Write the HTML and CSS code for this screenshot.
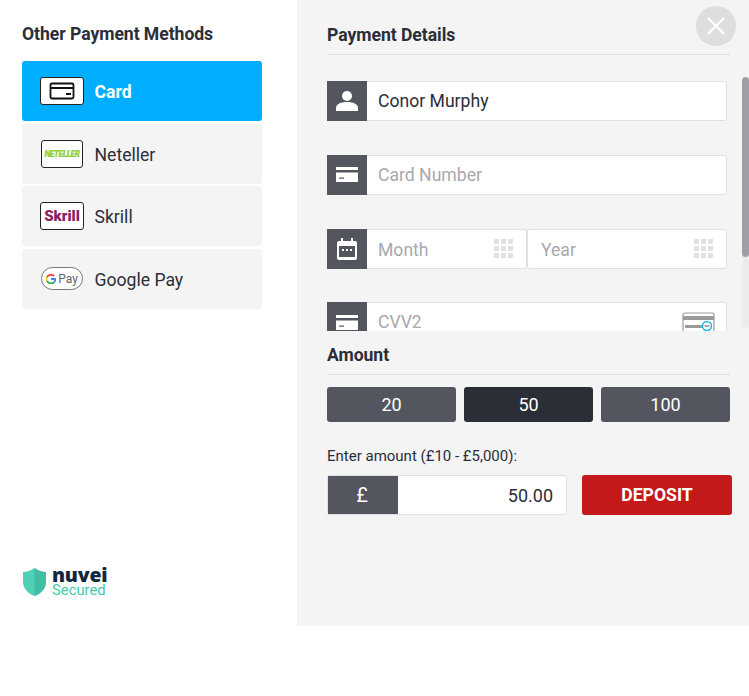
FILE: index.html
```html
<!DOCTYPE html>
<html lang="en">
<head>
  <meta charset="UTF-8">
  <title>Deposit</title>
  <meta name="viewport" content="width=device-width, initial-scale=1.0">
  <link rel="stylesheet" href="styles.css">
</head>
<body>
  <div class="modal">

    <!-- Left column -->
    <div class="methods">
      <h3 class="methods-title">Other Payment Methods</h3>

      <div class="method active">
        <span class="method-logo">
          <svg width="30" height="20" viewBox="0 0 30 20">
            <rect x="1.500" y="1.500" width="23" height="15" rx="1.500" transform="translate(2 1)" fill="none" stroke="#111" stroke-width="1.800"/>
            <rect x="3" y="6" width="24" height="2" fill="#111"/>
            <rect x="19" y="12" width="5" height="2" fill="#111"/>
          </svg>
        </span>
        <span class="method-name">Card</span>
      </div>

      <div class="method">
        <span class="method-logo small"><span class="neteller">NETELLER</span></span>
        <span class="method-name">Neteller</span>
      </div>

      <div class="method">
        <span class="method-logo"><span class="skrill">Skrill</span></span>
        <span class="method-name">Skrill</span>
      </div>

      <div class="method">
        <span class="method-logo pill">
          <svg width="10" height="10" viewBox="0 0 20 20">
            <path d="M10 10h9a9 9 0 0 1-3 6.500" fill="none" stroke="#4285f4" stroke-width="3.600"/>
            <path d="M16 16.500A9 9 0 0 1 2 14" fill="none" stroke="#34a853" stroke-width="3.600"/>
            <path d="M2 14a9 9 0 0 1 0-8" fill="none" stroke="#fbbc05" stroke-width="3.600"/>
            <path d="M2 6a9 9 0 0 1 14-2" fill="none" stroke="#ea4335" stroke-width="3.600"/>
          </svg>
          <span class="gpay">Pay</span>
        </span>
        <span class="method-name">Google Pay</span>
      </div>

      <div class="secured">
        <svg width="25" height="30" viewBox="0 0 25 29" preserveAspectRatio="none">
          <path d="M12.500 1C9 3.500 5 4.600 1 5v9c0 7 5 11.500 11.500 14C19 25.500 24 21 24 14V5c-4-.4-8-1.500-11.500-4z" fill="#4fcfb4"/>
          <path d="M12.500 1c3.500 2.500 7.500 3.600 11.500 4v9c0 7-5 11.500-11.500 14z" fill="#40bda3"/>
        </svg>
        <div class="secured-text">
          <div class="nuvei">nuvei</div>
          <div class="secured-label">Secured</div>
        </div>
      </div>
    </div>

    <!-- Right column -->
    <div class="details">
      <button class="close" aria-label="Close">
        <svg width="20" height="20" viewBox="0 0 20 20">
          <path d="M2 2l16 16M18 2L2 18" stroke="#fff" stroke-width="2.400"/>
        </svg>
      </button>

      <h3 class="section-title">Payment Details</h3>

      <div class="fields">
        <div class="field">
          <span class="field-icon">
            <svg width="22" height="22" viewBox="0 0 22 22">
              <circle cx="11" cy="6" r="5" fill="#fff"/>
              <path d="M0 21v-3c0-4 5-6 11-6s11 2 11 6v3z" fill="#fff"/>
            </svg>
          </span>
          <input class="field-input" type="text" value="Conor Murphy">
        </div>

        <div class="field">
          <span class="field-icon">
            <svg width="22" height="15" viewBox="0 0 22 15">
              <path d="M0 0h22v3H0zM0 5.500h22V15H0z" fill="#fff"/>
              <rect x="3" y="10.500" width="5" height="1.200" fill="#53565e"/>
            </svg>
          </span>
          <input class="field-input" type="text" placeholder="Card Number">
        </div>

        <div class="field">
          <span class="field-icon">
            <svg width="20" height="22" viewBox="0 0 20 22">
              <path d="M4 0h2v3h8V0h2v3h2a2 2 0 0 1 2 2v15a2 2 0 0 1-2 2H2a2 2 0 0 1-2-2V5a2 2 0 0 1 2-2h2z" fill="#fff"/>
              <rect x="2" y="8" width="16" height="11" fill="#53565e"/>
              <path d="M5 11h2v2H5zM9 11h2v2H9zM13 11h2v2h-2z" fill="#fff"/>
            </svg>
          </span>
          <div class="date-box">
            <input class="field-input date" type="text" placeholder="Month">
            <span class="grid-icon"><i></i><i></i><i></i><i></i><i></i><i></i><i></i><i></i><i></i></span>
          </div>
          <div class="date-box year">
            <input class="field-input date" type="text" placeholder="Year">
            <span class="grid-icon"><i></i><i></i><i></i><i></i><i></i><i></i><i></i><i></i><i></i></span>
          </div>
        </div>

        <div class="field">
          <span class="field-icon">
            <svg width="22" height="15" viewBox="0 0 22 15">
              <path d="M0 0h22v3H0zM0 5.500h22V15H0z" fill="#fff"/>
              <rect x="3" y="10.500" width="5" height="1.200" fill="#53565e"/>
            </svg>
          </span>
          <div class="date-box">
            <input class="field-input" type="text" placeholder="CVV2">
            <svg class="cvv-icon" width="34" height="24" viewBox="0 0 34 24">
              <rect x="1" y="1" width="31" height="22" rx="2" fill="#fff" stroke="#9a9a9a" stroke-width="1.200"/>
              <rect x="1" y="4" width="31" height="4" fill="#9a9a9a"/>
              <rect x="3" y="13" width="18" height="3" fill="#9a9a9a"/>
              <circle cx="25" cy="14" r="4.500" fill="#fff" stroke="#1ab4e8" stroke-width="1.500"/>
              <rect x="22.500" y="13" width="5" height="2" fill="#aaa"/>
            </svg>
          </div>
        </div>
      </div>

      <span class="scrollbar"><span class="scrollbar-thumb"></span></span>

      <div class="amount">
        <h3 class="section-title">Amount</h3>

        <div class="quick-amounts">
          <button class="quick">20</button>
          <button class="quick selected">50</button>
          <button class="quick">100</button>
        </div>

        <label class="amount-label">Enter amount (£10 - £5,000):</label>

        <div class="amount-row">
          <div class="amount-box">
            <span class="currency">£</span>
            <input class="amount-input" type="text" value="50.00">
          </div>
          <button class="deposit">DEPOSIT</button>
        </div>
      </div>
    </div>

  </div>
</body>
</html>
```

FILE: styles.css
```css
* {
  box-sizing: border-box;
}

body {
  margin: 0;
  background: #fff;
  font-family: Roboto, 'Liberation Sans', sans-serif;
  color: #2b2e38;
}

.modal {
  display: flex;
  width: 749px;
  height: 626px;
}

/* Left column */
.methods {
  display: flex;
  flex-direction: column;
  width: 297px;
  padding: 23px 35px 28px 22px;
}

.methods-title {
  margin: 0 0 16px;
  font-size: 17.600px;
  line-height: 22px;
  font-weight: 700;
  letter-spacing: -0.05px;
}

.method {
  display: flex;
  align-items: center;
  flex: none;
  height: 60px;
  margin-bottom: 2.670px;
  padding-left: 18px;
  background: #f4f4f4;
  border-radius: 3px;
  font-size: 17.600px;
}

.method.active {
  background: #00aeff;
  color: #fff;
  font-weight: 700;
}

.method-name {
  padding-top: 2px;
  margin-left: -0.5px;
}

.method-logo {
  display: flex;
  align-items: center;
  justify-content: center;
  width: 44px;
  height: 28px;
  margin-right: 11px;
  background: #fff;
  border: 1px solid #222;
  border-radius: 3px;
}

.method-logo.small {
  width: 42px;
  margin-left: 1px;
  margin-right: 12px;
}

.method-logo.pill {
  gap: 2px;
  width: 42px;
  height: 23px;
  margin-left: 1px;
  margin-right: 12px;
  border-color: #777;
  border-radius: 12px;
}

.neteller {
  font-size: 8.500px;
  font-weight: 900;
  font-style: italic;
  letter-spacing: -0.5px;
  color: #94d03a;
  -webkit-text-stroke: 0.2px #94d03a;
}

.skrill {
  font-size: 15px;
  font-weight: 900;
  color: #862165;
}

.gpay {
  font-size: 12px;
  color: #5f6368;
}

.secured {
  display: flex;
  align-items: center;
  gap: 5px;
  margin-top: auto;
  margin-right: -40px;
}

.nuvei {
  font-size: 19.500px;
  line-height: 17px;
  font-weight: 800;
  color: #14263b;
  font-family: 'Open Sans', Roboto, sans-serif;
  letter-spacing: -0.2px;
}

.secured-label {
  font-size: 14.800px;
  line-height: 15px;
  color: #45c9ac;
}

/* Right column */
.details {
  position: relative;
  width: 452px;
  padding: 24px 0 0 30px;
  background: #f4f4f4;
}

.close {
  position: absolute;
  top: 6px;
  right: 13px;
  display: flex;
  align-items: center;
  justify-content: center;
  width: 40px;
  height: 40px;
  padding: 0;
  background: #dedede;
  border: none;
  border-radius: 50%;
}

.section-title {
  width: 403px;
  margin: 0;
  padding-bottom: 8px;
  border-bottom: 1px solid #dcdcdc;
  font-size: 17.600px;
  line-height: 22px;
  font-weight: 700;
  letter-spacing: -0.05px;
}

.fields {
  height: 254px;
  margin-top: 22px;
  padding: 4.330px 22px 0 0;
  overflow: hidden;
}

/* scrollbar of the fields area */
.scrollbar {
  position: absolute;
  top: 77px;
  right: 0;
  width: 7px;
  height: 251px;
  background: #ececec;
  border-radius: 4px;
}

.scrollbar-thumb {
  display: block;
  height: 180px;
  background: #a09fa5;
  border-radius: 4px;
}

.field {
  display: flex;
  height: 40px;
  margin-bottom: 33.670px;
}

.field:last-child {
  margin-bottom: 0;
}

.field-icon {
  display: flex;
  flex: none;
  align-items: center;
  justify-content: center;
  width: 40px;
  height: 40px;
  background: #53565e;
}

.field-input {
  flex: 1;
  width: 100%;
  min-width: 0;
  height: 40px;
  padding: 0 11px;
  background: #fff;
  border: 1px solid #e0e0e0;
  border-left: none;
  border-radius: 0 3px 3px 0;
  font-family: inherit;
  font-size: 17.600px;
  color: #2b2e38;
  outline: none;
}

.field-input.date {
  padding-top: 2px;
}

.field-input::placeholder {
  color: #a8a8ae;
  opacity: 1;
}

.date-box {
  position: relative;
  display: flex;
  flex: 1;
}

.date-box.year {
  flex: none;
  width: 200px;
}

.date-box.year .field-input {
  padding-left: 13px;
  border-left: 1px solid #e0e0e0;
  border-radius: 3px;
}

.grid-icon {
  position: absolute;
  top: 10px;
  right: 14px;
  display: grid;
  grid-template-columns: repeat(3, 5px);
  grid-auto-rows: 5px;
  gap: 2px;
}

.grid-icon i {
  background: #e2e2e2;
}

.cvv-icon {
  position: absolute;
  top: 10px;
  right: 11px;
}

/* Amount */
.amount {
  padding-top: 13px;
}

.quick-amounts {
  display: flex;
  gap: 8px;
  width: 403px;
  margin-top: 12px;
}

.quick {
  flex: 1;
  height: 35px;
  padding: 0;
  background: #53565e;
  border: none;
  border-radius: 3px;
  font-family: inherit;
  font-size: 18px;
  color: #fff;
}

.quick.selected {
  background: #2b2e36;
}

.amount-label {
  display: block;
  margin-top: 25px;
  font-size: 15px;
  line-height: 18px;
}

.amount-row {
  display: flex;
  gap: 15px;
  margin-top: 10px;
}

.amount-box {
  display: flex;
  width: 240px;
  height: 40px;
  padding: 1px;
  background: #fff;
  border: 1px solid #e0e0e0;
  border-radius: 3px;
}

.currency {
  display: flex;
  flex: none;
  align-items: center;
  justify-content: center;
  width: 70px;
  margin: -1px 0 -1px -1px;
  padding-right: 2px;
  background: #53565e;
  font-size: 20px;
  color: #fff;
}

.amount-input {
  flex: 1;
  min-width: 0;
  padding: 0 12px 0 0;
  border: none;
  outline: none;
  text-align: right;
  font-family: inherit;
  font-size: 18px;
  color: #2b2e38;
}

.deposit {
  width: 150px;
  height: 40px;
  padding: 0;
  background: #c4191b;
  border: none;
  border-radius: 3px;
  font-family: inherit;
  font-size: 17.600px;
  font-weight: 700;
  color: #fff;
}
```
